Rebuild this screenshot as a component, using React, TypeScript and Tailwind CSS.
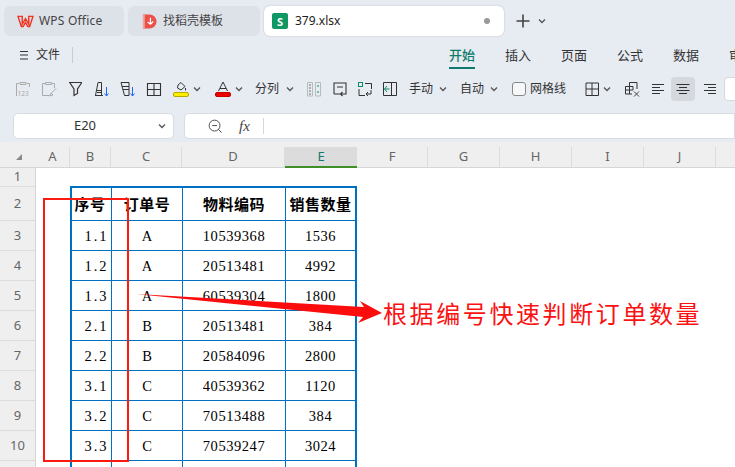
const columns = [
  { name: "A", width: "w-[34px]" },
  { name: "B", width: "w-[41px]" },
  { name: "C", width: "w-[71px]" },
  { name: "D", width: "w-[103px]" },
  { name: "E", width: "w-[72px]", active: true },
  { name: "F", width: "w-[71px]" },
  { name: "G", width: "w-[72px]" },
  { name: "H", width: "w-[72px]" },
  { name: "I", width: "w-[72px]" },
  { name: "J", width: "w-[72px]" },
  { name: "", width: "w-[40px]" },
];

const rowHeaders = [
  { n: 1, h: "h-[19px]" },
  { n: 2, h: "h-[34px]" },
  { n: 3, h: "h-[30px]" },
  { n: 4, h: "h-[30px]" },
  { n: 5, h: "h-[30px]" },
  { n: 6, h: "h-[30px]" },
  { n: 7, h: "h-[30px]" },
  { n: 8, h: "h-[30px]" },
  { n: 9, h: "h-[30px]" },
  { n: 10, h: "h-[30px]" },
];

const rows = [
  ["1.1", "A", "10539368", "1536"],
  ["1.2", "A", "20513481", "4992"],
  ["1.3", "A", "60539304", "1800"],
  ["2.1", "B", "20513481", "384"],
  ["2.2", "B", "20584096", "2800"],
  ["3.1", "C", "40539362", "1120"],
  ["3.2", "C", "70513488", "384"],
  ["3.3", "C", "70539247", "3024"],
  ["", "", "", ""],
];

function Chevron({ className = "" }: { className?: string }) {
  return (
    <svg viewBox="0 0 8 8" className={`w-2 h-2 shrink-0 ${className}`} fill="none" stroke="#555" strokeWidth="1.3">
      <path d="M1 2.5 L4 5.5 L7 2.5" />
    </svg>
  );
}

// toolbar icon wrapper, every glyph is drawn on a 16x16 box
function Ico({ ml, children }: { ml: string; children: React.ReactNode }) {
  return (
    <svg viewBox="0 0 16 16" className={`w-4 h-4 shrink-0 ${ml}`} fill="none" stroke="#333" strokeWidth="1">
      {children}
    </svg>
  );
}

function Toolbar() {
  return (
    <div className="h-[28px] mt-[7px] flex items-center text-[12px] text-[#333] overflow-hidden whitespace-nowrap shrink-0">
      <Ico ml="ml-[15px]">
        <path d="M4 2.5H1.5V15M12 2.5h2.500V6M5 1.500h6v2H5z" stroke="#aaa" />
        <text x="2.500" y="14.500" fontSize="6.500" fill="#aaa" stroke="none">123</text>
      </Ico>
      <Ico ml="ml-[10px]">
        <path d="M4 2.500H1.500V14.500H8M11 2.500h2.500V7M4.500 1.500h6v2h-6z" stroke="#aaa" />
        <path d="M15 7.500 L10.500 12 M10 12 L8.500 15 L12 14 Z" stroke="#aaa" />
      </Ico>
      <Ico ml="ml-[11px]">
        <path d="M1 1.500H14 M2 2 L6 8V14.500L9.500 12.500V8L13.500 2" strokeWidth="1.200" />
      </Ico>
      <Ico ml="ml-[10px]">
        <path d="M1 14.500 H9 M4 1.500H7.500V14.500H1.500Z M3 9.500H7.500 M3 11.500H7.500" />
        <path d="M12.500 6V15 M10.500 12.500 L12.500 15 L14.500 12.500" stroke="#1a66ff" />
      </Ico>
      <Ico ml="ml-[10px]">
        <path d="M1 1.500H9 V14.500H4.500Z M2 5.500H9 M3 8.500H9" />
        <path d="M12.500 6V15 M10.500 12.500 L12.500 15 L14.500 12.500" stroke="#1a66ff" />
      </Ico>
      <Ico ml="ml-[10px]">
        <path d="M1.500 2.500H14.500V14.500H1.500Z M8 2.500V14.500 M1.500 8.500H14.500" strokeWidth="1.100" />
      </Ico>
      <svg viewBox="0 0 16 16" className="w-4 h-4 shrink-0 ml-[11px]" fill="none" stroke="#333">
        <path d="M5 4 L8 1.500 L12 5.500 L8 9 L4.500 7 Z M12.500 7V9.500" />
        <rect x="0.500" y="11.500" width="15" height="4" rx="1.500" fill="#ffee00" stroke="#b5a800" />
      </svg>
      <Chevron className="ml-[4px]" />
      <svg viewBox="0 0 16 16" className="w-4 h-4 shrink-0 ml-[14px]" fill="none" stroke="#333">
        <path d="M3.500 10 L8 1 L12.500 10 M5 7.500H11" />
        <rect x="0.500" y="11.500" width="15" height="4" rx="1.500" fill="#ee0000" stroke="#c00000" />
      </svg>
      <Chevron className="ml-[4px]" />
      <span className="ml-[12px] w-[26px] shrink-0">分列</span>
      <Chevron className="ml-[5px]" />
      <Ico ml="ml-[12px]">
        <path d="M1.500 1.500H6.500V15H1.500Z M9.500 1.500H14.500V15H9.500Z" stroke="#b8bcbc" />
        <path d="M3 4H5M3 7H5M3 10H5M3 13H5" stroke="#999" strokeWidth="1.600" />
        <path d="M11 5H13M11 11H13" stroke="#4fae95" strokeWidth="1.600" />
      </Ico>
      <Ico ml="ml-[10px]">
        <path d="M2 13V2H14V10 M2 13H8 M5 6H11 M14 10V13H9 M10.500 11 L8.500 13 L10.500 15" strokeWidth="1.100" />
      </Ico>
      <Ico ml="ml-[9px]">
        <rect x="1.500" y="1.500" width="4" height="4" stroke="#0f8a63" />
        <path d="M8 2.500H14.500V8 M2 8V14.500H8 M14 9 L14 13 H9 M11 11 L9 13 L11 15" />
      </Ico>
      <Ico ml="ml-[9px]">
        <path d="M1.500 1.500H14.500V14.500H1.500Z M9.500 1.500V14.500" />
        <path d="M7.500 8H2.500 M5 5 L2.500 8 L5 11" stroke="#0f8a63" />
      </Ico>
      <span className="ml-[11px] w-[26px] shrink-0">手动</span>
      <Chevron className="ml-[4px]" />
      <span className="ml-[13px] w-[26px] shrink-0">自动</span>
      <Chevron className="ml-[4px]" />
      <span className="ml-[14px] w-[14px] h-[14px] shrink-0 rounded-[3px] border border-[#888] bg-[#f6f7f9]" />
      <span className="ml-[4px] w-[38px] shrink-0">网格线</span>
      <Ico ml="ml-[16px]">
        <path d="M2 2H14.500V14.500H2Z M8 2V14.500 M8 8H14.500 M2 8H8" />
      </Ico>
      <Chevron className="ml-[3px]" />
      <Ico ml="ml-[13px]">
        <path d="M8 13H1.500V5.500H5.500V1.500H13V8 M5.500 5.500H9V9H1.500 M5.500 5.500V13" />
        <path d="M10 10.500 L15 15.500 M15 10.500 L10 15.500" strokeWidth="0.900" />
      </Ico>
      <Ico ml="ml-[10px]">
        <path d="M2 3.500H14 M2 6.500H10 M2 9.500H14 M2 12.500H10" />
      </Ico>
      <span className="ml-[5px] w-[24px] h-[24px] shrink-0 rounded-[4px] bg-[#d5d8dc] flex items-center justify-center">
        <svg viewBox="0 0 16 16" className="w-4 h-4" fill="none" stroke="#333">
          <path d="M1.500 3.500H14.500 M4 6.500H12 M1.500 9.500H14.500 M4 12.500H12" />
        </svg>
      </span>
      <Ico ml="ml-[7px]">
        <path d="M2 3.500H14 M6 6.500H14 M2 9.500H14 M6 12.500H14" />
      </Ico>
      <span className="ml-[6px] w-[30px] h-[24px] shrink-0 rounded-l-[4px] bg-white border border-[#d5d8dd]" />
    </div>
  );
}

export default function App() {
  return (
    <div className="relative w-[735px] h-[467px] overflow-hidden flex flex-col bg-[#e7ebf2] font-['Noto_Sans','Noto_Sans_CJK_SC',sans-serif] text-[#333]">
      {/* ── Window tabs ─────────────────────────────────────── */}
      <div className="h-[36px] pt-[6px] pl-[4px] flex items-stretch gap-[4px] text-[12px] shrink-0">
        <div className="w-[120px] rounded-[6px] bg-[#dde1e8] flex items-center pl-[13px] gap-[5px]">
          <svg viewBox="0 0 18 14" className="w-[17px] h-[13px]" fill="none" stroke="#f0321e" strokeWidth="2.400">
            <path d="M1 1.500H5.500L5.500 4 L5.500 10 L9 4 L12.500 10 V1.500H17 L13.500 12.500H11.500 L9 8 L6.500 12.500H4.500Z" strokeWidth="1.500" />
          </svg>
          <span className="tracking-[0.2px] text-[#444]">WPS Office</span>
        </div>
        <div className="w-[132px] rounded-[6px] bg-[#dde1e8] flex items-center pl-[14px] gap-[6px]">
          <svg viewBox="0 0 16 16" className="w-[15px] h-[15px]">
            <path d="M1 0.500H8A7.500 7.500 0 0 1 8 15.500H1Z" fill="#ea5148" />
            <path d="M3 0.500H1V15.500H3Z" fill="#f4a39c" />
            <path d="M9 4V11 M9 11 L6 8.500 M9 11 L12 8" stroke="#fff" strokeWidth="1.300" fill="none" />
          </svg>
          <span className="text-[#444]">找稻壳模板</span>
        </div>
        <div className="w-[240px] rounded-[6px] bg-white flex items-center pl-[8px] gap-[7px] relative shadow-[0_0_2px_rgba(0,0,0,0.2)]">
          <span className="w-[16px] h-[16px] rounded-[2px] bg-[#0f9764] text-white text-[11px] font-bold flex items-center justify-center leading-none">S</span>
          <span className="text-[#222]">379.xlsx</span>
          <span className="ml-auto mr-[14px] w-[6px] h-[6px] rounded-full bg-[#999]" />
        </div>
        <svg viewBox="0 0 16 16" className="self-center ml-[7px] w-[16px] h-[16px]" fill="none" stroke="#444" strokeWidth="1.600">
          <path d="M8 1.500V14.500 M1.500 8H14.500" />
        </svg>
        <Chevron className="self-center ml-[3px]" />
      </div>

      {/* ── Menu row ────────────────────────────────────────── */}
      <div className="h-[26px] mt-[6px] flex items-center text-[12px] whitespace-nowrap shrink-0">
        <svg viewBox="0 0 10 10" className="ml-[19px] w-[10px] h-[10px] shrink-0" fill="none" stroke="#333">
          <path d="M1 1.500H9M1 5H9M1 9H9" />
        </svg>
        <span className="ml-[7px] w-[24px] shrink-0">文件</span>
        <span className="ml-[12px] w-px h-[16px] bg-[#c9cdd3] shrink-0" />
        <div className="ml-[376px] flex gap-[30px] text-[13px] h-[26px]">
          <span className="w-[26px] h-[27px] leading-[27px] font-medium text-[#0f7b6c] border-b-2 border-[#0f7b6c] shrink-0">开始</span>
          <span className="w-[26px] leading-[27px] shrink-0">插入</span>
          <span className="w-[26px] leading-[27px] shrink-0">页面</span>
          <span className="w-[26px] leading-[27px] shrink-0">公式</span>
          <span className="w-[26px] leading-[27px] shrink-0">数据</span>
          <span className="w-[26px] leading-[27px] shrink-0">审阅</span>
        </div>
      </div>

      <Toolbar />

      {/* ── Name box + formula bar ──────────────────────────── */}
      <div className="h-[26px] mt-[10px] flex text-[12px] shrink-0">
        <div className="ml-[13px] w-[161px] rounded-[5px] bg-white border border-[#d9dce1] flex items-center relative">
          <span className="w-full pr-[17px] text-center text-[13px]">E20</span>
          <Chevron className="absolute right-[7px]" />
        </div>
        <div className="ml-[10px] flex-1 rounded-l-[5px] bg-white border border-[#d9dce1] flex items-center">
          <svg viewBox="0 0 16 16" className="ml-[23px] w-[15px] h-[15px]" fill="none" stroke="#444">
            <circle cx="7" cy="7" r="5.800" />
            <path d="M4.500 7H9.500 M11 11 L14.500 14.500" />
          </svg>
          <span className="ml-[16px] w-[16px] font-['Liberation_Serif',serif] italic text-[15px] text-[#444]">fx</span>
          <span className="ml-[8px] w-px h-[16px] bg-[#d5d8dc]" />
        </div>
      </div>

      {/* ── Sheet ───────────────────────────────────────────── */}
      <div className="mt-[3px] pt-[5px] flex-1 min-h-0 bg-[#efefef] flex flex-col">
        <div className="h-[21px] flex border-b border-[#d6d6d6] text-[13px] text-[#666] shrink-0">
          <div className="w-[36px] shrink-0 flex items-center justify-end pr-[14px]">
            <span className="w-0 h-0 border-l-[6px] border-l-transparent border-b-[6px] border-b-[#888]" />
          </div>
          {columns.map((c) => (
            <div
              key={c.name + c.width}
              className={`${c.width} shrink-0 flex items-center justify-center ${
                c.active
                  ? "bg-[#dcdcdc] text-[#0f7b6c] border-b-2 border-[#3e8f27] h-[21px]"
                  : "border-r border-[#dcdcdc]"
              }`}
            >
              {c.name}
            </div>
          ))}
        </div>
        <div className="flex-1 flex min-h-0">
          <div className="w-[36px] shrink-0 border-r border-[#d6d6d6] text-[13px] text-[#666]">
            {rowHeaders.map((r) => (
              <div key={r.n} className={`${r.h} flex items-center justify-center border-b border-[#dcdcdc]`}>
                {r.n}
              </div>
            ))}
          </div>
          <div className="flex-1 bg-white pl-[34px] pt-[18px] overflow-hidden">
            <div className="w-[287px] border-2 border-[#0070c0] text-black font-['Liberation_Serif',serif] text-[14.5px]">
              <div className="h-[33px] flex border-b border-[#0070c0] font-['Noto_Sans_CJK_SC',sans-serif] font-bold text-[15px] tracking-[0.5px] whitespace-nowrap">
                <div className="w-[40px] border-r border-[#0070c0] flex items-center justify-center pr-[3px]">序号</div>
                <div className="w-[71px] border-r border-[#0070c0] flex items-center justify-center">订单号</div>
                <div className="w-[103px] border-r border-[#0070c0] flex items-center justify-center">物料编码</div>
                <div className="w-[69px] flex items-center justify-center">销售数量</div>
              </div>
              {rows.map((r, i) => (
                <div key={i} className="h-[30px] flex border-b border-[#0070c0]">
                  <div className="w-[40px] border-r border-[#0070c0] flex items-center justify-center pl-[10px] pt-[3px] tracking-[2px]">{r[0]}</div>
                  <div className="w-[71px] border-r border-[#0070c0] flex items-center justify-center pt-[3px]">{r[1]}</div>
                  <div className="w-[103px] border-r border-[#0070c0] flex items-center justify-center pt-[3px] tracking-[0.55px]">{r[2]}</div>
                  <div className="w-[69px] flex items-center justify-center pt-[3px] tracking-[0.55px]">{r[3]}</div>
                </div>
              ))}
            </div>
          </div>
        </div>
      </div>

      {/* ── Annotations drawn over the sheet ────────────────── */}
      <div className="absolute left-[43px] top-[198px] w-[86px] h-[264px] border-2 border-[#fb1a12]" />
      <svg className="absolute left-0 top-0 w-[735px] h-[467px] pointer-events-none" viewBox="0 0 735 467">
        <path d="M136 294 L364 307 L360 301 L382 313 L358 323 L363 317 Z" fill="#fb0d0d" />
      </svg>
      <div className="absolute left-[383px] top-[296px] text-[24px] leading-[34px] tracking-[2.6px] text-[#fb1212] whitespace-nowrap font-['Noto_Sans_CJK_SC',sans-serif]">
        根据编号快速判断订单数量
      </div>
    </div>
  );
}
